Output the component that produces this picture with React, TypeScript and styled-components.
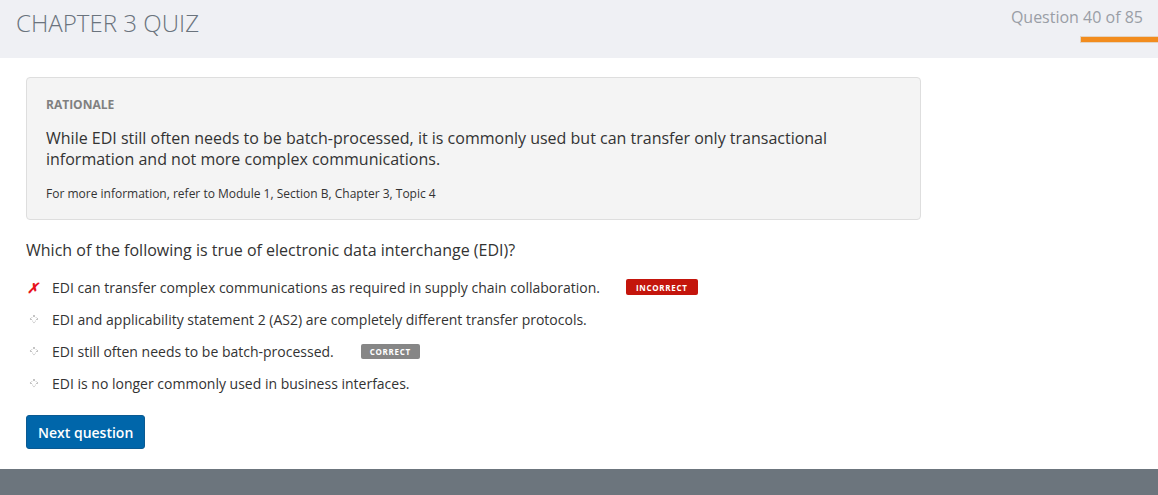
import React from "react";
import styled, { createGlobalStyle } from "styled-components";

const Global = createGlobalStyle`
  html, body { margin: 0; padding: 0; background: #fff; }
  body { font-family: "Open Sans", "Noto Sans", sans-serif; color: #333; }
`;

const Page = styled.div`
  min-height: 495px;
  display: flex;
  flex-direction: column;
`;

const Header = styled.header`
  height: 58px;
  background: #eff0f4;
  display: flex;
  justify-content: space-between;
  align-items: flex-start;
`;

const Title = styled.h1`
  margin: 0;
  padding: 8px 0 0 16px;
  font-weight: 300;
  font-size: 24.1px;
  line-height: 30px;
  color: #6a737d;
`;

const Progress = styled.div`
  display: flex;
  flex-direction: column;
  align-items: flex-end;
  padding-top: 7px;
`;

const Counter = styled.div`
  font-size: 16px;
  line-height: 20px;
  color: #9a9ea6;
  padding-right: 15px;
`;

const Bar = styled.div`
  margin-top: 9px;
  width: 78px;
  height: 7px;
  background: #f28c1e;
  border: 1px solid #e3d4c2;
  border-right: none;
  box-sizing: border-box;
`;

const Main = styled.main`
  flex: 1;
  padding: 19px 26px 20px;
`;

const RationaleBox = styled.section`
  width: 895px;
  box-sizing: border-box;
  background: #f4f4f4;
  border: 1px solid #dedede;
  border-radius: 4px;
  padding: 18px 19px 17px;
`;

const Label = styled.div`
  font-size: 12px;
  font-weight: 700;
  line-height: 17px;
  color: #808080;
`;

const Explanation = styled.p`
  margin: 15px 0 0;
  font-size: 16px;
  line-height: 21px;
  color: #333;
  max-width: 800px;
`;

const Reference = styled.p`
  margin: 16px 0 0;
  font-size: 12px;
  line-height: 16px;
  color: #333;
`;

const Question = styled.h2`
  margin: 18px 0 0;
  font-size: 16px;
  font-weight: 400;
  line-height: 24px;
  color: #333;
`;

const Options = styled.ul`
  list-style: none;
  margin: 15px 0 0;
  padding: 0;
  display: flex;
  flex-direction: column;
  gap: 12px;
`;

const Option = styled.li`
  display: flex;
  align-items: center;
  height: 20px;
  font-size: 14px;
  color: #333;
`;

const Marker = styled.span`
  width: 26px;
  flex: none;
  display: flex;
  align-items: center;
`;

const Cross = styled.span`
  padding-left: 1px;
  color: #e8141c;
  font-size: 14px;
  font-weight: 700;
  font-style: italic;
`;

const Diamond = styled.span`
  margin-left: 5px;
  width: 4px;
  height: 4px;
  border: 1px dotted #c4c4c4;
  transform: rotate(45deg);
`;

const Badge = styled.span<{ $kind: "correct" | "incorrect" }>`
  margin-left: ${(p) => (p.$kind === "incorrect" ? "26px" : "27px")};
  display: inline-flex;
  align-items: center;
  height: ${(p) => (p.$kind === "incorrect" ? "16px" : "15px")};
  padding: 0 ${(p) => (p.$kind === "incorrect" ? "10px" : "9px")};
  border-radius: 2px;
  background: ${(p) => (p.$kind === "incorrect" ? "#c4150c" : "#868686")};
  color: #fff;
  font-size: 8px;
  font-weight: 700;
  letter-spacing: 0.7px;
`;

const NextButton = styled.button`
  margin-top: 22px;
  height: 34px;
  padding: 0 11px;
  background: #0066aa;
  border: 1px solid #0b5a92;
  border-radius: 3px;
  color: #fff;
  font-family: "Open Sans", sans-serif;
  font-size: 14px;
  font-weight: 600;
`;

const Footer = styled.footer`
  height: 26px;
  background: #6c757d;
`;

type Opt = { text: string; wrong?: boolean; badge?: "correct" | "incorrect" };

const options: Opt[] = [
  {
    text: "EDI can transfer complex communications as required in supply chain collaboration.",
    wrong: true,
    badge: "incorrect",
  },
  { text: "EDI and applicability statement 2 (AS2) are completely different transfer protocols." },
  { text: "EDI still often needs to be batch-processed.", badge: "correct" },
  { text: "EDI is no longer commonly used in business interfaces." },
];

export default function App() {
  return (
    <>
      <Global />
      <Page>
        <Header>
          <Title>CHAPTER 3 QUIZ</Title>
          <Progress>
            <Counter>Question 40 of 85</Counter>
            <Bar />
          </Progress>
        </Header>
        <Main>
          <RationaleBox>
            <Label>RATIONALE</Label>
            <Explanation>
              While EDI still often needs to be batch-processed, it is commonly used but can transfer only
              transactional information and not more complex communications.
            </Explanation>
            <Reference>For more information, refer to Module 1, Section B, Chapter 3, Topic 4</Reference>
          </RationaleBox>
          <Question>Which of the following is true of electronic data interchange (EDI)?</Question>
          <Options>
            {options.map((o) => (
              <Option key={o.text}>
                <Marker>{o.wrong ? <Cross>✗</Cross> : <Diamond />}</Marker>
                {o.text}
                {o.badge && <Badge $kind={o.badge}>{o.badge === "correct" ? "CORRECT" : "INCORRECT"}</Badge>}
              </Option>
            ))}
          </Options>
          <NextButton>Next question</NextButton>
        </Main>
        <Footer />
      </Page>
    </>
  );
}
